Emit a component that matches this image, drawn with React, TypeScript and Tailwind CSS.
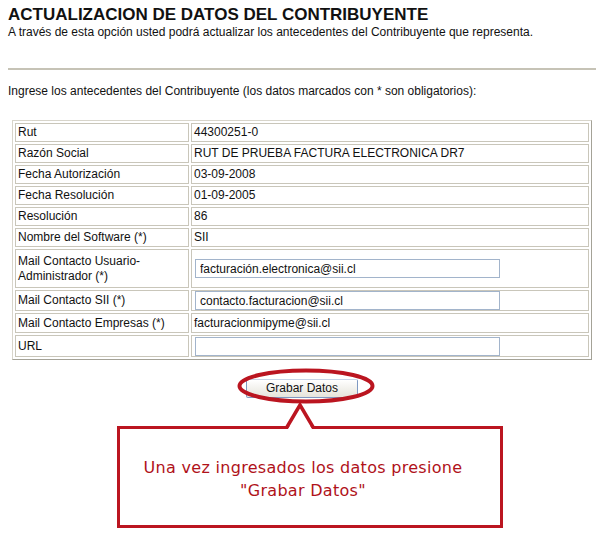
import React from "react";

const rows: { label: string; value?: string; input?: string; h: string }[] = [
  { label: "Rut", value: "44300251-0", h: "h-[19px]" },
  { label: "Razón Social", value: "RUT DE PRUEBA FACTURA ELECTRONICA DR7", h: "h-[19px]" },
  { label: "Fecha Autorización", value: "03-09-2008", h: "h-[19px]" },
  { label: "Fecha Resolución", value: "01-09-2005", h: "h-[19px]" },
  { label: "Resolución", value: "86", h: "h-[19px]" },
  { label: "Nombre del Software (*)", value: "SII", h: "h-[19px]" },
  { label: "Mail Contacto Usuario-Administrador (*)", input: "facturación.electronica@sii.cl", h: "h-[39px]" },
  { label: "Mail Contacto SII (*)", input: "contacto.facturacion@sii.cl", h: "h-[21px]" },
  { label: "Mail Contacto Empresas (*)", value: "facturacionmipyme@sii.cl", h: "h-[20px]" },
  { label: "URL", input: "", h: "h-[22px]" },
];

const App = () => {
  return (
    <div className="relative w-[600px] h-[541px] overflow-hidden bg-white text-[#111] font-['Liberation_Sans',Arial,sans-serif]">
      {/* Header */}
      <div className="pl-2 pt-[5px]">
        <h1 className="text-[17px] font-bold leading-[20px]">ACTUALIZACION DE DATOS DEL CONTRIBUYENTE</h1>
        <p className="text-[12px] leading-[15px]">
          A través de esta opción usted podrá actualizar los antecedentes del Contribuyente que representa.
        </p>
      </div>

      <div className="mt-[28px] ml-2 mr-[4px] h-[2px] bg-[#c6c3b6]" />

      <p className="mt-[14px] pl-2 text-[12px] leading-[15px]">
        Ingrese los antecedentes del Contribuyente (los datos marcados con * son obligatorios):
      </p>

      {/* Form table */}
      <table className="mt-[21px] ml-[12px] w-[580px] border-separate border-spacing-[2px] border border-t-[#d8d5cb] border-l-[#d8d5cb] border-r-[#a4a297] border-b-[#a4a297] text-[12px] leading-[15px]">
        <tbody>
          {rows.map((r) => (
            <tr key={r.label}>
              <td className={`${r.h} w-[174px] border border-[#c9c6ba] py-0 pl-[2px] pr-1 align-middle`}>{r.label}</td>
              <td className={`${r.h} border border-[#c9c6ba] py-0 pl-[2px] align-middle`}>
                {r.input !== undefined ? (
                  <input
                    defaultValue={r.input}
                    className="ml-[1px] block h-[19px] w-[305px] border border-[#a2b4cb] px-[4px] text-[12px] text-[#111] outline-none"
                  />
                ) : (
                  r.value
                )}
              </td>
            </tr>
          ))}
        </tbody>
      </table>

      {/* Button */}
      <div className="ml-[12px] w-[580px] mt-[19px] flex justify-center">
        <button className="h-[19px] w-[112px] rounded-[2px] border border-[#7f99c2] border-t-[#c7d3e6] bg-gradient-to-b from-white to-[#e6e4db] text-[12px] leading-[15px] text-[#111]">
          Grabar Datos
        </button>
      </div>

      {/* Callout */}
      <div className="mt-[28px] ml-[117px] w-[386px] h-[102px] border-[3px] border-[#bb1520] pr-[14px] pt-[27px] flex flex-col items-center text-[16px] leading-[23px] tracking-[0.3px] text-[#b0121a] font-['DejaVu_Sans',Verdana,sans-serif]">
        <span>Una vez ingresados los datos presione</span>
        <span>"Grabar Datos"</span>
      </div>

      {/* Ellipse highlight around the button */}
      <svg className="absolute left-[234px] top-[366px]" width="144" height="40" viewBox="0 0 144 40">
        <ellipse cx="72" cy="20" rx="66.5" ry="15.5" fill="none" stroke="#bb1520" strokeWidth="4" />
      </svg>

      {/* Callout pointer */}
      <svg className="absolute left-[280px] top-[400px]" width="40" height="30" viewBox="0 0 40 30">
        <polygon points="8,29 20,6 32,29" fill="white" />
        <polyline points="7,27 20,5 33,27" fill="none" stroke="#bb1520" strokeWidth="3.5" strokeLinejoin="miter" />
      </svg>
    </div>
  );
};

export default App;
